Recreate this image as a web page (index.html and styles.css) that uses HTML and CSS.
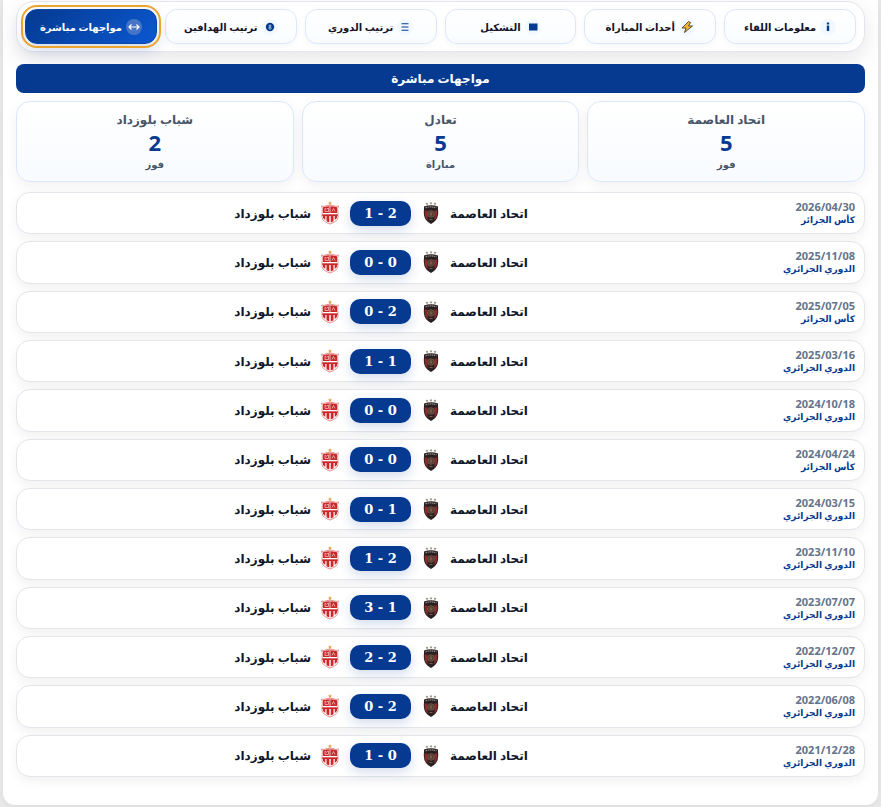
FILE: index.html
```html
<!DOCTYPE html>
<html lang="ar" dir="rtl">
<head>
    <meta charset="UTF-8">
    <meta name="viewport" content="width=device-width, initial-scale=1.0">
    <title>مواجهات مباشرة</title>
    <link rel="stylesheet" href="styles.css">
</head>
<body>

    <!-- Crests shared by every match row -->
    <svg class="sprite" aria-hidden="true">
        <symbol id="crest-usma" viewBox="0 0 20 24">
            <path d="M6 1.200l.5 1 1 .1-.8.7.2 1-.9-.5-.9.500.2-1-.8-.7 1-.1zM10 .8l.5 1 1 .1-.8.7.2 1-.9-.5-.9.500.2-1-.8-.7 1-.1zM14 1.200l.5 1 1 .1-.8.7.2 1-.9-.5-.9.500.2-1-.8-.7 1-.1z" fill="#8b8b78"/>
            <path d="M3 5.500Q10 3 17 5.500V8q1 7-2 11-2 2.500-5 4-3-1.500-5-4-3-4-2-11z" fill="#2a2021"/>
            <path d="M3.800 9.500h2.800v10Q3.200 16 3.800 9.500zM16.200 9.500h-2.800v10q3.400-3.500 2.800-10z" fill="#8e2a2c"/>
            <path d="M4.500 6.800Q10 5 15.500 6.800" stroke="#918b88" stroke-width="1.200" stroke-dasharray="1.500 .6" fill="none"/>
            <circle cx="10" cy="13" r="3.300" fill="#4b3a31" stroke="#7d5e47" stroke-width=".8"/>
            <path d="M8.500 18.500h3M10 11v4M8.500 13h3" stroke="#94704e" stroke-width=".8"/>
        </symbol>
        <symbol id="crest-crb" viewBox="0 0 20 24">
            <path d="M10 0l.6 1.400 1.500.1-1.100 1 .3 1.500L10 3.200 8.700 4 9 2.500l-1.100-1 1.500-.1z" fill="#dda24a"/>
            <path d="M1.500 5Q4 6 6 4.800q4-1.200 8 0Q16 6 18.500 5l-.8 2.500q.3 5 .3 9-.6 4-8 6.500-7.400-2.500-8-6.500 0-4 .3-9z" fill="#fff" stroke="#dd7570" stroke-width=".8"/>
            <path d="M3 6.200Q10 4.400 17 6.200V12H3z" fill="#c9272b"/>
            <path d="M5 7l1.500 1.200L8.500 7v3.500H5zM12 10.500l1.500-3 1.500 3" fill="none" stroke="#f3b9b6" stroke-width=".8"/>
            <path d="M10 5.500V12" stroke="#fff" stroke-width=".7"/>
            <path d="M2.300 13.300h15.400v1.700H2.300z" fill="#c9272b"/>
            <path d="M3 14.500h2.300V19L3 17zM6.500 14.500h2.800v7l-2.800-1.300zM10.700 14.500h2.800v5.700l-2.800 1.300zM14.700 14.500H17V17l-2.300 2z" fill="#d0262a"/>
        </symbol>
    </svg>

    <main class="panel">
        <nav class="tabs" aria-label="أقسام المباراة">
            <button class="tab" type="button">
                <span class="tab-icon"><svg viewBox="0 0 16 16"><path d="M6.800 3.500h2.400v2H6.800zM6.800 6.500h2.400V12H6.800z" fill="currentColor"/></svg></span>
                معلومات اللقاء
            </button>
            <button class="tab" type="button">
                <span class="tab-icon"><svg viewBox="0 0 16 16"><path d="M9.500 2.500L3 9h4l-1.500 4.500L13.500 7H9.500l2-3.500z" fill="#f5b52e" stroke="#352d22" stroke-width=".8" stroke-linejoin="round"/></svg></span>
                أحداث المباراة
            </button>
            <button class="tab" type="button">
                <span class="tab-icon"><svg viewBox="0 0 16 16"><path d="M4 4.500h8.500v7H4z" fill="currentColor"/></svg></span>
                التشكيل
            </button>
            <button class="tab" type="button">
                <span class="tab-icon"><svg viewBox="0 0 16 16"><path d="M4.500 4.700h7M4.500 8h7M4.500 11.300h7" stroke="currentColor" stroke-width="1.100"/></svg></span>
                ترتيب الدوري
            </button>
            <button class="tab" type="button">
                <span class="tab-icon"><svg viewBox="0 0 16 16"><circle cx="8" cy="8" r="4.200" fill="currentColor"/><circle cx="8" cy="6.900" r=".9" fill="none" stroke="#fff" stroke-width=".6"/><circle cx="8" cy="9.200" r="1.100" fill="none" stroke="#fff" stroke-width=".6"/></svg></span>
                ترتيب الهدافين
            </button>
            <button class="tab active" type="button">
                <span class="tab-icon"><svg viewBox="0 0 16 16"><path d="M3 8h10M5.500 5.500L3 8l2.500 2.500M10.500 5.500L13 8l-2.500 2.500" fill="none" stroke="currentColor" stroke-width="1.200"/></svg></span>
                مواجهات مباشرة
            </button>
        </nav>

        <h1 class="title">مواجهات مباشرة</h1>

        <section class="stats">
            <div class="stat">
                <span class="stat-name">اتحاد العاصمة</span>
                <span class="stat-value">5</span>
                <span class="stat-label">فوز</span>
            </div>
            <div class="stat">
                <span class="stat-name">تعادل</span>
                <span class="stat-value">5</span>
                <span class="stat-label">مباراة</span>
            </div>
            <div class="stat">
                <span class="stat-name">شباب بلوزداد</span>
                <span class="stat-value">2</span>
                <span class="stat-label">فوز</span>
            </div>
        </section>

        <section class="matches" id="matches"></section>
    </main>

    <script src="script.js"></script>
</body>
</html>
```
FILE: styles.css
```css
* {
    box-sizing: border-box;
}

body {
    margin: 0;
    min-height: 100vh;
    display: flex;
    padding: 0 3px 2px;
    background-color: #e9e9e9;
    font-family: "Noto Sans", "DejaVu Sans", sans-serif;
    color: #0f172a;
}

.sprite {
    display: none;
}

.panel {
    flex: 1;
    min-width: 0;
    display: flex;
    flex-direction: column;
    padding: 1px 13px 28px;
    background-color: #fff;
    border-radius: 0 0 12px 12px;
    box-shadow: 0 2px 10px rgba(0, 0, 0, 0.06);
}

/* Tabs */
.tabs {
    display: grid;
    grid-template-columns: repeat(6, 1fr);
    gap: 8px;
    padding: 7px 8px;
    background-color: #fff;
    border: 1px solid #e2e5ec;
    border-radius: 18px;
    box-shadow: 0 8px 22px rgba(15, 23, 42, 0.1);
}

.tab {
    display: flex;
    align-items: center;
    justify-content: center;
    gap: 4px;
    height: 35px;
    padding: 0;
    border: 1px solid #dbe7fb;
    border-radius: 12px;
    background: linear-gradient(#fff, #f9fcff);
    box-shadow: 0 2px 6px rgba(15, 23, 42, 0.04);
    font-family: inherit;
    font-size: 10px;
    font-weight: 700;
    color: #14142b;
    white-space: nowrap;
}

.tab-icon {
    width: 16px;
    height: 16px;
    border-radius: 50%;
    background-color: #f2f8ff;
    color: #053b91;
}

.tab-icon svg {
    display: block;
    width: 100%;
    height: 100%;
}

.tab.active {
    border-color: #0847a8;
    background: linear-gradient(135deg, #053a90, #0b57d0);
    color: #fff;
    outline: 2px solid #eba52f;
    outline-offset: 2px;
    box-shadow: 0 6px 16px rgba(5, 58, 144, 0.2);
}

.tab.active .tab-icon {
    background-color: #4675c7;
    color: #fff;
}

.title {
    margin: 12px 0 8px;
    background-color: #053a90;
    border-radius: 8px;
    color: #fff;
    font-size: 12px;
    line-height: 29px;
    text-align: center;
}

/* Totals */
.stats {
    display: grid;
    grid-template-columns: repeat(3, 1fr);
    gap: 8px;
    margin-bottom: 10px;
}

.stat {
    display: flex;
    flex-direction: column;
    align-items: center;
    height: 81px;
    padding-top: 8px;
    border: 1px solid #dbe7fb;
    border-radius: 14px;
    background: linear-gradient(#fff, #f8fbff);
    box-shadow: 0 4px 14px rgba(15, 23, 42, 0.06);
    color: #475569;
    font-weight: 700;
}

.stat-name {
    font-size: 12px;
    line-height: 20px;
}

.stat-value {
    color: #053a90;
    font-size: 22px;
    line-height: 24px;
}

.stat-label {
    font-size: 10px;
    line-height: 20px;
}

/* Match list */
.matches {
    flex: 1;
    display: grid;
    grid-auto-rows: 1fr;
    gap: 7px;
}

.match {
    display: grid;
    grid-template-columns: 120px 1fr;
    align-items: center;
    padding: 0 9px;
    border: 1px solid #e2e6eb;
    border-radius: 14px;
    background-color: #fff;
    box-shadow: 0 4px 12px rgba(15, 23, 42, 0.06);
}

.match-info {
    display: flex;
    flex-direction: column;
    font-weight: 700;
    line-height: 13px;
}

.match-date {
    color: #64748b;
    font-size: 11px;
}

.match-cup {
    color: #053a90;
    font-size: 9px;
}

.match-teams {
    display: grid;
    grid-template-columns: 1fr 61px 1fr;
    align-items: center;
    gap: 10px;
}

.team {
    display: flex;
    align-items: center;
    gap: 9px;
    font-size: 12px;
    font-weight: 700;
}

.team.home {
    justify-content: flex-end;
}

.crest {
    width: 20px;
    height: 24px;
}

.score {
    border-radius: 10px;
    background-color: #053a90;
    box-shadow: 0 4px 12px rgba(5, 58, 144, 0.18);
    color: #fff;
    direction: ltr;
    font-family: "DejaVu Serif", serif;
    font-size: 13px;
    font-weight: 700;
    line-height: 25px;
    text-align: center;
}
```
FILE: script.js
```js
const league = 'الدوري الجزائري';
const cup = 'كأس الجزائر';

const matches = [
    ['2026/04/30', cup, '1 - 2'],
    ['2025/11/08', league, '0 - 0'],
    ['2025/07/05', cup, '0 - 2'],
    ['2025/03/16', league, '1 - 1'],
    ['2024/10/18', league, '0 - 0'],
    ['2024/04/24', cup, '0 - 0'],
    ['2024/03/15', league, '0 - 1'],
    ['2023/11/10', league, '1 - 2'],
    ['2023/07/07', league, '3 - 1'],
    ['2022/12/07', league, '2 - 2'],
    ['2022/06/08', league, '0 - 2'],
    ['2021/12/28', league, '1 - 0']
];

// Build one row per match
document.getElementById('matches').innerHTML = matches.map(([date, name, score]) => `
    <article class="match">
        <div class="match-info">
            <span class="match-date">${date}</span>
            <span class="match-cup">${name}</span>
        </div>
        <div class="match-teams">
            <div class="team home">
                <span>اتحاد العاصمة</span>
                <svg class="crest" aria-hidden="true"><use href="#crest-usma"></use></svg>
            </div>
            <span class="score">${score}</span>
            <div class="team away">
                <svg class="crest" aria-hidden="true"><use href="#crest-crb"></use></svg>
                <span>شباب بلوزداد</span>
            </div>
        </div>
    </article>
`).join('');
```
